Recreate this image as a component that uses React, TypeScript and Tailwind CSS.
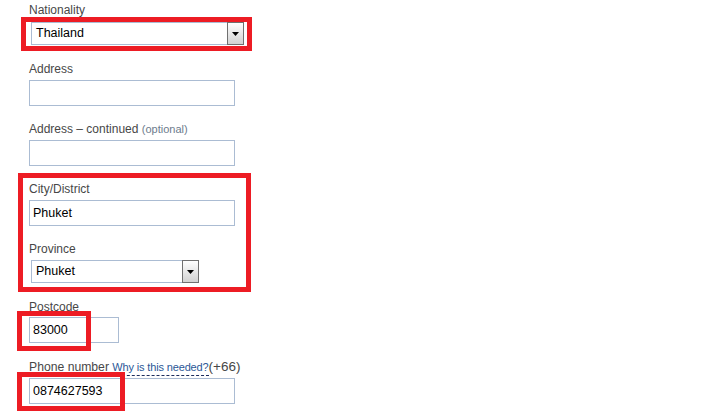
import type { ReactNode } from "react";

const font = { fontFamily: '"Liberation Sans", Arial, sans-serif' };

function Label({ children, className = "" }: { children: ReactNode; className?: string }) {
  return <div className={`h-4 text-[12px] leading-4 text-[#474747] ${className}`}>{children}</div>;
}

function TextBox({ value = "", width = "w-[206px]" }: { value?: string; width?: string }) {
  return (
    <input
      readOnly
      value={value}
      className={`${width} block h-[26px] border border-[#abbcd3] bg-white px-[3px] text-[12.5px] text-black outline-none`}
    />
  );
}

function Dropdown({ value, width }: { value: string; width: string }) {
  return (
    <div className={`${width} ml-[2px] flex h-[23px] border border-[#abbcd3] bg-white`}>
      <span className="flex-1 pl-[4px] text-[12.5px] leading-[21px] text-black">{value}</span>
      <span className="-my-px -mr-px flex w-[17px] items-center justify-center border border-[#707070] bg-gradient-to-b from-white to-[#d2d2d2]">
        <svg width="7" height="4" viewBox="0 0 7 4">
          <path d="M0 0h7L3.5 4z" fill="#000" />
        </svg>
      </span>
    </div>
  );
}

export default function App() {
  return (
    <div className="relative h-[412px] w-[707px] overflow-hidden bg-white" style={font}>
      <div className="pl-[29px] pt-[2px]">
        <Label className="mb-[4px]">Nationality</Label>
        <Dropdown value="Thailand" width="w-[213px]" />

        <Label className="mt-[16px] mb-[3px]">Address</Label>
        <TextBox />

        <Label className="mt-[15px] mb-[3px]">
          Address – continued <span className="text-[11px] text-[#6d7b8d]">(optional)</span>
        </Label>
        <TextBox />

        <Label className="mt-[15px] mb-[3px]">City/District</Label>
        <TextBox value="Phuket" />

        <Label className="mt-[15px] mb-[3px]">Province</Label>
        <Dropdown value="Phuket" width="w-[168px]" />

        <Label className="mt-[16px] mb-[2px]">Postcode</Label>
        <TextBox value="83000" width="w-[90px]" />

        <Label className="mt-[16px] mb-[3px] whitespace-nowrap">
          <span className="text-[12.2px]">Phone number</span>{" "}
          <span className="inline-block border-b border-dashed border-[#1c2c5c] pb-[1px] text-[11px] leading-[13px] tracking-[-0.15px] text-[#2b5797]">
            Why is this needed?
          </span>
          <span className="text-[13.5px]">(+66)</span>
        </Label>
        <TextBox value="0874627593" />
      </div>

      {/* annotation boxes */}
      <div className="pointer-events-none absolute left-[21px] top-[17px] h-[34px] w-[231px] border-[5px] border-[#ed1c24]" />
      <div className="pointer-events-none absolute left-[18px] top-[173px] h-[119px] w-[233px] border-[5px] border-[#ed1c24]" />
      <div className="pointer-events-none absolute left-[17px] top-[311px] h-[40px] w-[74px] border-[5px] border-[#ed1c24]" />
      <div className="pointer-events-none absolute left-[17px] top-[372px] h-[39px] w-[108px] border-[5px] border-[#ed1c24]" />
    </div>
  );
}
